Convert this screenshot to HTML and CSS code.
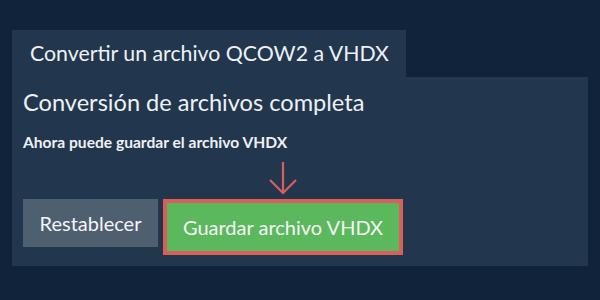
FILE: index.html
```html
<!DOCTYPE html>
<html lang="es">
<head>
    <meta charset="UTF-8">
    <meta name="viewport" content="width=device-width, initial-scale=1.0">
    <title>Convertir QCOW2 a VHDX</title>
    <link rel="stylesheet" href="styles.css">
</head>
<body>
    <div class="container">
        <div class="tab">Convertir un archivo QCOW2 a VHDX</div>
        <div class="panel">
            <h2>Conversión de archivos completa</h2>
            <p class="note">Ahora puede guardar el archivo VHDX</p>
            <div class="actions">
                <button class="btn btn-reset">Restablecer</button>
                <div class="save-wrap">
                    <svg class="arrow" width="30" height="34" viewBox="0 0 30 34">
                        <path d="M15 1 V32 M2 19 L15 32 L28 19" fill="none" stroke="#d9605a" stroke-width="2.2"/>
                    </svg>
                    <button class="btn btn-save">Guardar archivo VHDX</button>
                </div>
            </div>
        </div>
    </div>
</body>
</html>
```

FILE: styles.css
```css
body {
    margin: 0;
    background-color: #11233a;
    font-family: Lato, "Open Sans", sans-serif;
    color: #eef1f4;
}
.container {
    padding: 30px 12px 0 12px;
}
.tab {
    display: inline-block;
    background-color: #22374d;
    font-size: 21.3px;
    line-height: 47px;
    height: 47px;
    padding: 0 17px 0 18px;
}
.panel {
    background-color: #22374d;
    padding: 10px 10px 10px 11px;
    height: 169px;
}
h2 {
    margin: 0;
    font-weight: 400;
    font-size: 23.6px;
    line-height: 30px;
}
.note {
    margin: 16px 0 0 0;
    font-weight: 700;
    font-size: 15.6px;
}
.actions {
    display: flex;
    align-items: flex-start;
    margin-top: 10px;
}
.btn {
    font-family: Lato, "Open Sans", sans-serif;
    font-size: 20px;
    color: #f3f5f7;
    border: none;
    cursor: pointer;
}
.btn-reset {
    background-color: #4e5f70;
    width: 135px;
    height: 48px;
    margin-top: 38px;
}
.save-wrap {
    display: flex;
    flex-direction: column;
    align-items: center;
    margin-left: 5px;
}
.arrow {
    display: block;
    margin-bottom: 4px;
}
.btn-save {
    background-color: #5cb85c;
    width: 240px;
    height: 56px;
    border: 4px solid #d9605a;
    padding: 0;
}
```
